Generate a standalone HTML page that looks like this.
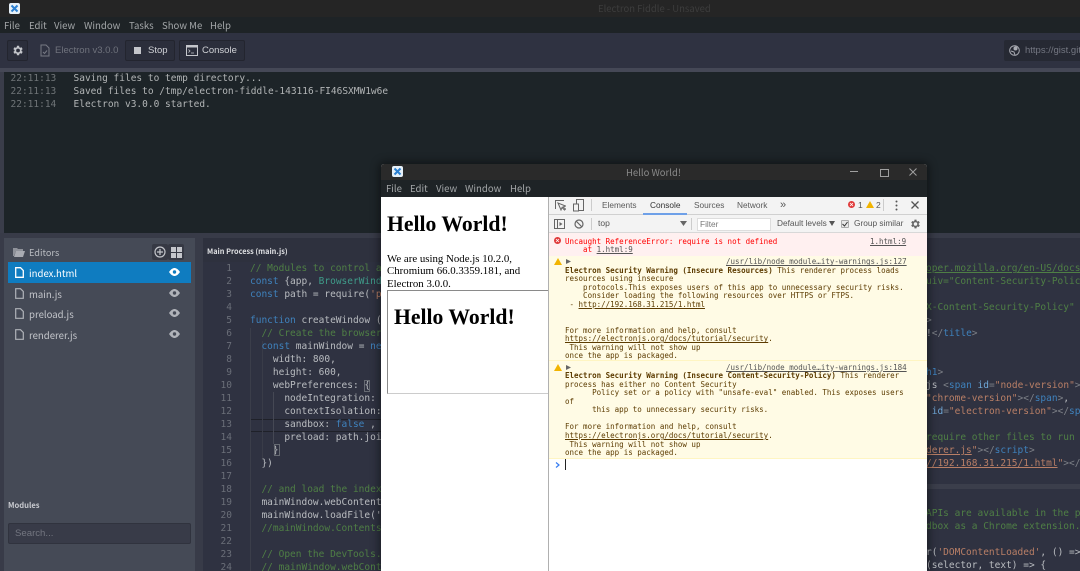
<!DOCTYPE html>
<html><head><meta charset="utf-8"><style>
html,body{margin:0;padding:0;width:1080px;height:571px;overflow:hidden}
body{position:relative;background:#2f3241;font-family:"Noto Sans CJK SC","Liberation Sans",sans-serif}
.a{position:absolute}
.t{position:absolute;white-space:pre}
.menu{font-size:9.6px;line-height:16px;color:#a3a6a8}
.btn{position:absolute;background:#2b2e3b;border:1px solid #23252f;border-radius:2px;box-sizing:border-box}
pre{margin:0;font:9.5px/12.97px "DejaVu Sans Mono","Liberation Mono",monospace;color:#b9bcc0;position:absolute;white-space:pre}
.c{color:#4f7f45}.k{color:#3f82bd}.s{color:#b97f66}.g{color:#7d8087}.u{text-decoration:underline}
.num{color:#6a6e78;text-align:right;width:22px;left:210px;top:263.3px}
.d{font:7.5px/8.55px "DejaVu Sans Mono","Liberation Mono",monospace;position:absolute;white-space:pre;color:#5c3b00}
.d b{font-weight:bold;color:#5c3b00}
.file{position:absolute;left:29px;font-size:9.6px;line-height:20px;color:#c3c5ca}
.tab{position:absolute;top:196px;font:8.3px/18px "Liberation Sans",sans-serif;color:#5a5a5a}
.tb{font:9.5px/17px "Liberation Sans",sans-serif}
</style></head><body>
<!-- title bar -->
<div class="a" style="left:0;top:0;width:1080px;height:17px;background:#252525"></div>
<svg class="a" style="left:9px;top:3px" width="11" height="11" viewBox="0 0 11 11"><rect width="11" height="11" rx="2" fill="#e6f0f8"/><path d="M2.5 2.5L8.5 8.5M8.5 2.5L2.5 8.5" stroke="#2b7fd0" stroke-width="2"/></svg>
<div class="t" style="left:598px;top:1px;font-size:9.5px;line-height:15px;color:#3d3d3d">Electron Fiddle - Unsaved</div>
<!-- menu -->
<div class="a" style="left:0;top:17px;width:1080px;height:16px;background:#1e2326"></div>
<div class="t menu" style="left:4px;top:17px">File</div>
<div class="t menu" style="left:29px;top:17px">Edit</div>
<div class="t menu" style="left:54px;top:17px">View</div>
<div class="t menu" style="left:84px;top:17px">Window</div>
<div class="t menu" style="left:129px;top:17px">Tasks</div>
<div class="t menu" style="left:162px;top:17px">Show Me</div>
<div class="t menu" style="left:210px;top:17px">Help</div>
<!-- toolbar -->
<div class="a" style="left:0;top:33px;width:1080px;height:35px;background:#2f3241"></div>
<div class="btn" style="left:7px;top:40px;width:21px;height:21px"></div>
<svg class="a" style="left:11px;top:44px" width="13" height="13" viewBox="0 0 24 24"><path fill="#c4c6cb" d="M19.4 13a7.5 7.5 0 000-2l2.1-1.6-2-3.5-2.5 1a7.5 7.5 0 00-1.7-1L15 3.2h-4l-.4 2.7a7.5 7.5 0 00-1.7 1l-2.5-1-2 3.5L6.5 11a7.5 7.5 0 000 2l-2.1 1.6 2 3.5 2.5-1a7.5 7.5 0 001.7 1l.4 2.7h4l.4-2.7a7.5 7.5 0 001.7-1l2.5 1 2-3.5zM13 15.5a3.5 3.5 0 110-7 3.500 3.500 0 010 7z"/></svg>
<svg class="a" style="left:40px;top:44px" width="10" height="13" viewBox="0 0 10 13"><path d="M1 1h5l3 3v8H1z" fill="none" stroke="#777a84" stroke-width="1"/><path d="M3 8l1.5 1.5L7 6.5" fill="none" stroke="#777a84"/></svg>
<div class="t tb" style="left:55px;top:42px;color:#6f727c">Electron v3.0.0</div>
<div class="btn" style="left:125px;top:40px;width:50px;height:21px"></div>
<div class="a" style="left:134px;top:47px;width:7px;height:7px;background:#c4c6cb"></div>
<div class="t tb" style="left:148px;top:42px;color:#d0d2d6">Stop</div>
<div class="btn" style="left:179px;top:40px;width:66px;height:21px"></div>
<svg class="a" style="left:186px;top:45px" width="12" height="11" viewBox="0 0 12 11"><rect x=".5" y=".5" width="11" height="10" fill="none" stroke="#c4c6cb"/><rect x=".5" y=".5" width="11" height="2" fill="#c4c6cb"/><path d="M2.5 4.5l1.5 1.5-1.5 1.5M5 8h3" fill="none" stroke="#c4c6cb" stroke-width=".8"/></svg>
<div class="t tb" style="left:202px;top:42px;color:#d0d2d6">Console</div>
<div class="a" style="left:1004px;top:40px;width:80px;height:21px;background:#262933;border-radius:2px"></div>
<svg class="a" style="left:1009px;top:45px" width="11" height="11" viewBox="0 0 11 11"><circle cx="5.5" cy="5.5" r="4.8" fill="none" stroke="#a9abb2"/><circle cx="6.5" cy="3.5" r="2" fill="#a9abb2"/><path d="M2 6l3 1 1 3" fill="none" stroke="#a9abb2"/></svg>
<div class="t tb" style="left:1025px;top:42px;color:#747782">https://gist.github.com</div>
<div class="a" style="left:0;top:68px;width:1080px;height:4px;background:#454856"></div>
<!-- console -->
<div class="a" style="left:4px;top:72px;width:1076px;height:161px;background:#1d2428"></div>
<div class="a" style="left:0;top:72px;width:4px;height:161px;background:#3a3d4a"></div>
<pre style="left:10.5px;top:73.3px;color:#6f7477">22:11:13
22:11:13
22:11:14</pre>
<pre style="left:73.5px;top:73.3px;color:#b2b5b6">Saving files to temp directory...
Saved files to /tmp/electron-fiddle-143116-FI46SXMW1w6e
Electron v3.0.0 started.</pre>
<!-- lower -->
<div class="a" style="left:0;top:233px;width:1080px;height:338px;background:#383b48"></div>
<div class="a" style="left:4px;top:238px;width:191px;height:333px;background:#454a56"></div>
<svg class="a" style="left:13px;top:247px" width="12" height="10" viewBox="0 0 12 10"><path d="M0 1h4l1 1h5v2H3L1 9H0z" fill="#8f929a"/><path d="M3 4h9l-2 6H1z" fill="#a9abb2"/></svg>
<div class="t" style="left:29px;top:243px;font-size:9.2px;line-height:18px;color:#b8bbc0">Editors</div>
<div class="a" style="left:152px;top:244px;width:16px;height:16px;background:#363944;border-radius:2px"></div>
<div class="a" style="left:168px;top:244px;width:16px;height:16px;background:#363944;border-radius:2px"></div>
<svg class="a" style="left:154px;top:246px" width="12" height="12" viewBox="0 0 12 12"><circle cx="6" cy="6" r="5" fill="none" stroke="#c4c6cb" stroke-width="1.2"/><path d="M6 3v6M3 6h6" stroke="#c4c6cb" stroke-width="1.2"/></svg>
<svg class="a" style="left:171px;top:247px" width="11" height="11" viewBox="0 0 11 11"><path d="M0 0h5v5H0zM6 0h5v5H6zM0 6h5v5H0zM6 6h5v5H6z" fill="#c4c6cb"/></svg>
<div class="a" style="left:8px;top:262px;width:183px;height:21px;background:#0f7cc0"></div>
<div class="file" style="top:263px;color:#fff">index.html</div>
<div class="file" style="top:284px">main.js</div>
<div class="file" style="top:304px">preload.js</div>
<div class="file" style="top:325px">renderer.js</div>
<svg class="a" style="left:15px;top:267px" width="9" height="11" viewBox="0 0 9 11"><path d="M.7.7h4.8l2.8 2.8v6.8H.7z" fill="none" stroke="#fff" stroke-width="1.3"/></svg>
<svg class="a" style="left:15px;top:288px" width="9" height="11" viewBox="0 0 9 11"><path d="M.7.7h4.8l2.8 2.8v6.8H.7z" fill="none" stroke="#b0b3b9" stroke-width="1.2"/></svg>
<svg class="a" style="left:15px;top:308px" width="9" height="11" viewBox="0 0 9 11"><path d="M.7.7h4.8l2.8 2.8v6.8H.7z" fill="none" stroke="#b0b3b9" stroke-width="1.2"/></svg>
<svg class="a" style="left:15px;top:329px" width="9" height="11" viewBox="0 0 9 11"><path d="M.7.7h4.8l2.8 2.8v6.8H.7z" fill="none" stroke="#b0b3b9" stroke-width="1.2"/></svg>
<svg class="a" style="left:169px;top:268px" width="11" height="8" viewBox="0 0 11 8"><path d="M0 4c2-3 4-4 5.5-4S9 1 11 4C9 7 7 8 5.5 8S2 7 0 4z" fill="#fff"/><circle cx="5.5" cy="4" r="1.7" fill="#0f7cc0"/></svg>
<svg class="a" style="left:169px;top:289px" width="11" height="8" viewBox="0 0 11 8"><path d="M0 4c2-3 4-4 5.5-4S9 1 11 4C9 7 7 8 5.5 8S2 7 0 4z" fill="#b0b3b9"/><circle cx="5.5" cy="4" r="1.7" fill="#454a56"/></svg>
<svg class="a" style="left:169px;top:309px" width="11" height="8" viewBox="0 0 11 8"><path d="M0 4c2-3 4-4 5.5-4S9 1 11 4C9 7 7 8 5.5 8S2 7 0 4z" fill="#b0b3b9"/><circle cx="5.5" cy="4" r="1.7" fill="#454a56"/></svg>
<svg class="a" style="left:169px;top:330px" width="11" height="8" viewBox="0 0 11 8"><path d="M0 4c2-3 4-4 5.5-4S9 1 11 4C9 7 7 8 5.5 8S2 7 0 4z" fill="#b0b3b9"/><circle cx="5.5" cy="4" r="1.7" fill="#454a56"/></svg>
<div class="t" style="left:8px;top:499px;font-size:7.6px;line-height:13px;font-weight:bold;color:#c9cbd0">Modules</div>
<div class="a" style="left:8px;top:523px;width:183px;height:21px;background:#383b48;border:1px solid #30333e;border-radius:2px;box-sizing:border-box"></div>
<div class="t" style="left:15px;top:525px;font:9.6px/17px 'Liberation Sans',sans-serif;color:#737680">Search...</div>
<!-- editor -->
<div class="a" style="left:203px;top:238px;width:877px;height:333px;background:#2f3241"></div>
<div class="a" style="left:203px;top:238px;width:877px;height:24px;background:#2e313e"></div>
<div class="t" style="left:207px;top:246px;font-size:7.3px;line-height:13px;font-weight:bold;color:#dfe0e3">Main Process (main.js)</div>
<div class="a" style="left:700px;top:484px;width:380px;height:5px;background:#3b3e4b"></div>
<div class="a" style="left:250px;top:328px;width:1px;height:243px;background:#3b3e4a"></div>
<div class="a" style="left:251px;top:418.5px;width:140px;height:11px;border-top:1px solid #1f2129;border-bottom:1px solid #1f2129"></div>
<div class="a" style="left:262px;top:341px;width:1px;height:118px;background:#393c48"></div>
<div class="a" style="left:273px;top:392px;width:1px;height:52px;background:#454854"></div>
<pre class="num">1
2
3
4
5
6
7
8
9
10
11
12
13
14
15
16
17
18
19
20
21
22
23
24</pre>
<pre style="left:250px;top:263.3px"><span class="c">// Modules to control application life and create native browser window</span>
<span class="k">const</span> {app, <span style="color:#3f9c8a">BrowserWindow</span>} = require(<span class="s">'electron'</span>)
<span class="k">const</span> path = require(<span class="s">'path'</span>)

<span class="k">function</span> createWindow () {
  <span class="c">// Create the browser window.</span>
  <span class="k">const</span> mainWindow = <span class="k">new</span> BrowserWindow({
    width: 800,
    height: 600,
    webPreferences: {
      nodeIntegration: true,
      contextIsolation: false,
      sandbox: <span class="k">false</span> ,
      preload: path.join(__dirname, 'preload.js')
    }
  })

  <span class="c">// and load the index.html of the app.</span>
  mainWindow.webContents.openDevTools()
  mainWindow.loadFile('index.html')
  <span class="c">//mainWindow.Contents.loadURL</span>

  <span class="c">// Open the DevTools.</span>
  <span class="c">// mainWindow.webContents.openDevTools()</span></pre>
<div class="a" style="left:364px;top:379.5px;width:6px;height:12px;border:1px solid #666a72;box-sizing:border-box"></div>
<div class="a" style="left:274px;top:444px;width:6px;height:12px;border:1px solid #666a72;box-sizing:border-box"></div>
<pre style="left:926px;top:263.3px"><span class="c"><span class="u">oper.mozilla.org/en-US/docs</span>
uiv="Content-Security-Polic

X-Content-Security-Policy"</span>
<span class="g">&gt;</span>
!<span class="g">&lt;/</span><span class="k">title</span><span class="g">&gt;</span>


<span class="k">h1</span><span class="g">&gt;</span>
js <span class="g">&lt;</span><span class="k">span</span> <span style="color:#6fa8d8">id</span><span class="g">=</span><span class="s">"node-version"</span><span class="g">&gt;&lt;/</span>
<span class="s">"chrome-version"</span><span class="g">&gt;&lt;/</span><span class="k">span</span><span class="g">&gt;</span>,
 <span style="color:#6fa8d8">id</span><span class="g">=</span><span class="s">"electron-version"</span><span class="g">&gt;&lt;/</span><span class="k">sp</span>

<span class="c">require other files to run</span>
<span class="s"><span class="u">derer.js</span>"</span><span class="g">&gt;&lt;/</span><span class="k">script</span><span class="g">&gt;</span>
<span class="s"><span class="u">//192.168.31.215/1.html</span>"</span><span class="g">&gt;&lt;/</span></pre>
<pre style="left:926px;top:508.3px"><span class="c">APIs are available in the p
dbox as a Chrome extension.</span>

r(<span class="s">'DOMContentLoaded'</span>, () =&gt;
(selector, text) =&gt; {</pre>
<!-- shadow + popup window -->
<div class="a" style="left:381px;top:164px;width:546px;height:407px;background:#fff;border-radius:3px 3px 0 0;box-shadow:0 0 9px 2px rgba(0,0,0,.45)"></div>
<div class="a" style="left:381px;top:164px;width:546px;height:16px;background:#2a2a2a;border-radius:3px 3px 0 0"></div>
<div class="a" style="left:381px;top:180px;width:546px;height:17px;background:#1e2326"></div>
<svg class="a" style="left:392px;top:166px" width="11" height="11" viewBox="0 0 11 11"><rect width="11" height="11" rx="2" fill="#e6f0f8"/><path d="M2.5 2.5L8.5 8.5M8.5 2.5L2.5 8.5" stroke="#2b7fd0" stroke-width="2"/></svg>
<div class="t" style="left:626px;top:164px;font-size:9.5px;line-height:16px;color:#8a8a8a">Hello World!</div>
<div class="a" style="left:850px;top:171px;width:8px;height:1px;background:#a0a0a0"></div>
<div class="a" style="left:880px;top:169px;width:7px;height:6px;border:1px solid #a0a0a0"></div>
<svg class="a" style="left:909px;top:168px" width="8" height="8" viewBox="0 0 8 8"><path d="M.5.5l7 7M7.5.5l-7 7" stroke="#a0a0a0"/></svg>
<div class="t menu" style="left:386px;top:180px;line-height:17px">File</div>
<div class="t menu" style="left:410px;top:180px;line-height:17px">Edit</div>
<div class="t menu" style="left:436px;top:180px;line-height:17px">View</div>
<div class="t menu" style="left:465px;top:180px;line-height:17px">Window</div>
<div class="t menu" style="left:510px;top:180px;line-height:17px">Help</div>
<!-- page -->
<div class="t" style="left:387px;top:209px;font:bold 21.7px/30px 'Liberation Serif',serif;color:#000">Hello World!</div>
<div class="a" style="left:387px;top:252.5px;width:160px;font:10.85px/12.6px 'Liberation Serif',serif;color:#000">We are using Node.js 10.2.0,<br>Chromium 66.0.3359.181, and<br>Electron 3.0.0.</div>
<div class="a" style="left:387px;top:290px;width:162px;height:104px;box-sizing:border-box;border:1px solid #8a8a8a;border-right:0;border-bottom-color:#ccc"></div>
<div class="t" style="left:394px;top:302px;font:bold 21.7px/30px 'Liberation Serif',serif;color:#000">Hello World!</div>
<!-- devtools -->
<div class="a" style="left:548px;top:197px;width:1px;height:374px;background:#b0b0b0"></div>
<div class="a" style="left:549px;top:197px;width:378px;height:36px;background:#f3f3f3"></div>
<div class="a" style="left:549px;top:214px;width:378px;height:1px;background:#d0d0d0"></div>
<div class="a" style="left:549px;top:232px;width:378px;height:1px;background:#d8d8d8"></div>
<svg class="a" style="left:555px;top:200px" width="11" height="11" viewBox="0 0 11 11"><path d="M9 .5H.5V9M3 3l3 7 1-2.5L9.5 10l1-1L8 7l2.5-1z" fill="none" stroke="#666" stroke-width="1"/></svg>
<svg class="a" style="left:573px;top:199px" width="11" height="13" viewBox="0 0 11 13"><rect x="3.5" y=".5" width="7" height="11" fill="none" stroke="#666"/><rect x=".5" y="5" width="5" height="7" fill="#f3f3f3" stroke="#666"/></svg>
<div class="a" style="left:591px;top:199px;width:1px;height:12px;background:#ccc"></div>
<div class="tab" style="left:602px">Elements</div>
<div class="tab" style="left:650px;color:#333">Console</div>
<div class="a" style="left:643px;top:213px;width:44px;height:1.5px;background:#6ea0e8"></div>
<div class="tab" style="left:694px">Sources</div>
<div class="tab" style="left:737px">Network</div>
<div class="tab" style="left:780px;font-size:11px">»</div>
<svg class="a" style="left:848px;top:201px" width="7" height="7" viewBox="0 0 7 7"><circle cx="3.5" cy="3.5" r="3.5" fill="#e03a3a"/><path d="M2 2l3 3M5 2l-3 3" stroke="#fff" stroke-width=".8"/></svg>
<div class="t" style="left:858px;top:200px;font:8.5px/10px 'Liberation Sans',sans-serif;color:#555">1</div>
<svg class="a" style="left:866px;top:201px" width="8" height="7" viewBox="0 0 8 7"><path d="M4 0l4 7H0z" fill="#f2b400"/></svg>
<div class="t" style="left:876px;top:200px;font:8.5px/10px 'Liberation Sans',sans-serif;color:#555">2</div>
<div class="a" style="left:883px;top:199px;width:1px;height:12px;background:#ccc"></div>
<svg class="a" style="left:895px;top:200px" width="3" height="11" viewBox="0 0 3 11"><circle cx="1.5" cy="1.5" r="1" fill="#555"/><circle cx="1.5" cy="5.5" r="1" fill="#555"/><circle cx="1.5" cy="9.5" r="1" fill="#555"/></svg>
<svg class="a" style="left:911px;top:201px" width="8" height="8" viewBox="0 0 8 8"><path d="M.5.5l7 7M7.5.5l-7 7" stroke="#555" stroke-width="1.3"/></svg>
<svg class="a" style="left:554px;top:219px" width="11" height="10" viewBox="0 0 11 10"><rect x=".5" y=".5" width="10" height="9" fill="none" stroke="#666"/><path d="M3.5.5v9" stroke="#666"/><path d="M5.5 3l3 2-3 2z" fill="#666"/></svg>
<svg class="a" style="left:574px;top:219px" width="10" height="10" viewBox="0 0 10 10"><circle cx="5" cy="5" r="4" fill="none" stroke="#666" stroke-width="1.2"/><path d="M2 2l6 6" stroke="#666" stroke-width="1.2"/></svg>
<div class="a" style="left:591px;top:218px;width:1px;height:12px;background:#ccc"></div>
<div class="t" style="left:598px;top:218px;font:8.5px/11px 'Liberation Sans',sans-serif;color:#555">top</div>
<svg class="a" style="left:680px;top:221px" width="7" height="5" viewBox="0 0 7 5"><path d="M0 0h7L3.5 5z" fill="#666"/></svg>
<div class="a" style="left:691px;top:218px;width:1px;height:12px;background:#ccc"></div>
<div class="a" style="left:697px;top:218px;width:74px;height:13px;background:#fff;border:1px solid #ddd;box-sizing:border-box"></div>
<div class="t" style="left:700px;top:218px;font:8.3px/13px 'Liberation Sans',sans-serif;color:#777">Filter</div>
<div class="t" style="left:777px;top:218px;font:8.3px/11px 'Liberation Sans',sans-serif;color:#555">Default levels</div>
<svg class="a" style="left:829px;top:221px" width="6" height="5" viewBox="0 0 6 5"><path d="M0 0h6L3 5z" fill="#555"/></svg>
<div class="a" style="left:841px;top:220px;width:8px;height:8px;background:#e8e8e8;border:1px solid #aaa;box-sizing:border-box;border-radius:1px"></div>
<svg class="a" style="left:842px;top:221px" width="6" height="6" viewBox="0 0 6 6"><path d="M.5 3l2 2L5.5 1" fill="none" stroke="#333"/></svg>
<div class="t" style="left:854px;top:218px;font:8.3px/11px 'Liberation Sans',sans-serif;color:#555">Group similar</div>
<svg class="a" style="left:909px;top:218px" width="12" height="12" viewBox="0 0 24 24"><path fill="#666" d="M19.4 13a7.5 7.5 0 000-2l2.1-1.6-2-3.5-2.5 1a7.5 7.5 0 00-1.7-1L15 3.2h-4l-.4 2.7a7.5 7.5 0 00-1.7 1l-2.5-1-2 3.5L6.5 11a7.5 7.5 0 000 2l-2.1 1.6 2 3.5 2.5-1a7.5 7.5 0 001.7 1l.4 2.7h4l.4-2.7a7.5 7.5 0 001.7-1l2.5 1 2-3.5zM13 15.5a3.5 3.5 0 110-7 3.5 3.5 0 010 7z"/></svg>
<!-- console rows -->
<div class="a" style="left:549px;top:233px;width:378px;height:23px;background:#fff0f0"></div>
<div class="a" style="left:549px;top:256px;width:378px;height:202px;background:#fffbe5"></div>
<div class="a" style="left:549px;top:360px;width:378px;height:1px;background:#fff5c2"></div>
<div class="a" style="left:549px;top:458px;width:378px;height:1px;background:#fff5c2"></div>
<div class="a" style="left:549px;top:459px;width:378px;height:112px;background:#fff"></div>
<svg class="a" style="left:554px;top:237px" width="7" height="7" viewBox="0 0 7 7"><circle cx="3.5" cy="3.5" r="3.5" fill="#e03a3a"/><path d="M2 2l3 3M5 2l-3 3" stroke="#fff" stroke-width=".8"/></svg>
<div class="d" style="left:565px;top:237.6px;color:#f00">Uncaught ReferenceError: require is not defined
    at <span class="u" style="color:#555">1.html:9</span></div>
<div class="d u" style="left:870px;top:237.6px;color:#555">1.html:9</div>
<svg class="a" style="left:554px;top:258px" width="8" height="7" viewBox="0 0 8 7"><path d="M4 0l4 7H0z" fill="#f2b400"/></svg>
<svg class="a" style="left:566px;top:259px" width="5" height="5" viewBox="0 0 5 5"><path d="M0 0l5 2.5L0 5z" fill="#666"/></svg>
<div class="d u" style="left:726px;top:258.2px;color:#555">/usr/lib/node_module…ity-warnings.js:127</div>
<div class="d" style="left:565px;top:266.7px"><b>Electron Security Warning (Insecure Resources)</b> This renderer process loads
resources using insecure
    protocols.This exposes users of this app to unnecessary security risks.
    Consider loading the following resources over HTTPS or FTPS.
 - <span class="u">http://192.168.31.215/1.html</span>


For more information and help, consult
<span class="u">https://electronjs.org/docs/tutorial/security</span>.
 This warning will not show up
once the app is packaged.</div>
<svg class="a" style="left:554px;top:364px" width="8" height="7" viewBox="0 0 8 7"><path d="M4 0l4 7H0z" fill="#f2b400"/></svg>
<svg class="a" style="left:566px;top:365px" width="5" height="5" viewBox="0 0 5 5"><path d="M0 0l5 2.5L0 5z" fill="#666"/></svg>
<div class="d u" style="left:726px;top:363.6px;color:#555">/usr/lib/node_module…ity-warnings.js:184</div>
<div class="d" style="left:565px;top:372.2px"><b>Electron Security Warning (Insecure Content-Security-Policy)</b> This renderer
process has either no Content Security
      Policy set or a policy with "unsafe-eval" enabled. This exposes users
of
      this app to unnecessary security risks.

For more information and help, consult
<span class="u">https://electronjs.org/docs/tutorial/security</span>.
 This warning will not show up
once the app is packaged.</div>
<svg class="a" style="left:555px;top:462px" width="5" height="6" viewBox="0 0 5 6"><path d="M1 .5L4 3 1 5.5" fill="none" stroke="#367cf1" stroke-width="1.2"/></svg>
<div class="a" style="left:565px;top:459px;width:1px;height:11px;background:#222"></div>
</body></html>
